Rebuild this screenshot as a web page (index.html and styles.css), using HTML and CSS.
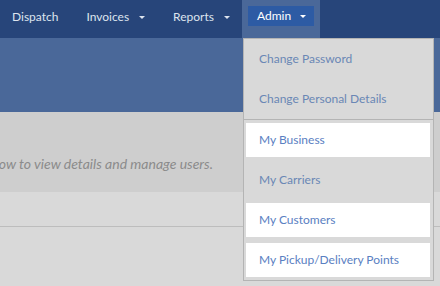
FILE: index.html
```html
<!DOCTYPE html>
<html lang="en">
<head>
    <meta charset="UTF-8">
    <meta name="viewport" content="width=device-width, initial-scale=1.0">
    <title>My Business</title>
    <link rel="stylesheet" href="styles.css">
</head>
<body>
    <nav class="topbar">
        <ul class="nav-list">
            <li class="nav-item"><a href="#">Dispatch</a></li>
            <li class="nav-item"><a href="#">Invoices<span class="caret"></span></a></li>
            <li class="nav-item"><a href="#">Reports<span class="caret"></span></a></li>
            <li class="nav-item open">
                <a href="#" class="admin-toggle">Admin<span class="caret"></span></a>
                <ul class="dropdown">
                    <li><a href="#">Change Password</a></li>
                    <li><a href="#">Change Personal Details</a></li>
                    <li class="divider"></li>
                    <li class="lit"><a href="#">My Business</a></li>
                    <li><a href="#">My Carriers</a></li>
                    <li class="lit"><a href="#">My Customers</a></li>
                    <li class="lit"><a href="#">My Pickup/Delivery Points</a></li>
                </ul>
            </li>
        </ul>
    </nav>

    <header class="page-head"></header>

    <section class="intro">
        <div class="intro-inner">
            <p>Select a business from the list below to view details and manage users.</p>
        </div>
    </section>

    <div class="table-head"></div>
    <div class="table-body"></div>
</body>
</html>
```

FILE: styles.css
```css
body {
    margin: 0;
    background-color: #d9d9d9;
    font-family: Lato, "Open Sans", sans-serif;
    font-size: 12px;
    overflow: hidden;
}
a {
    text-decoration: none;
    color: inherit;
}
.topbar {
    height: 38px;
    background-color: #27457a;
}
.nav-list {
    list-style: none;
    margin: 0;
    padding: 0 0 0 12px;
    display: flex;
    height: 100%;
}
.nav-item {
    position: relative;
    display: flex;
    align-items: center;
    margin-right: 28px;
    color: #dde4ee;
    padding-bottom: 6px;
}
.nav-item:nth-child(3) {
    margin-right: 12px;
}
.caret {
    display: inline-block;
    width: 0;
    height: 0;
    border-left: 3px solid transparent;
    border-right: 3px solid transparent;
    border-top: 3px solid #dde4ee;
    margin-left: 10px;
    vertical-align: middle;
}
.nav-item.open {
    background-color: #4a6899;
    padding: 6px 6px 0;
    align-items: flex-start;
    color: #fff;
}
.admin-toggle {
    display: block;
    height: 20px;
    line-height: 19px;
    padding: 0 8px 0 9px;
    background-color: #2d5ba4;
}
.admin-toggle .caret {
    border-top-color: #fff;
    margin-left: 9px;
}
.dropdown {
    position: absolute;
    top: 38px;
    left: 1px;
    width: 189px;
    list-style: none;
    margin: 0;
    padding: 0;
    display: flex;
    flex-direction: column;
    background-color: #d9d9d9;
    border: 1px solid #b4b4b4;
    z-index: 2;
}
.dropdown li {
    margin: 3px 3px 3px 2px;
    height: 34px;
}
.dropdown li a {
    display: block;
    line-height: 34px;
    padding-left: 13px;
    color: #6a87b5;
}
.dropdown li.lit {
    background-color: #fff;
}
.dropdown li.lit a {
    color: #5a80c2;
}
.dropdown li.divider {
    height: 1px;
    margin: 0;
    background-color: #b4b4b4;
}
.page-head {
    height: 74px;
    background-color: #4a6899;
}
.intro {
    height: 80px;
    background-color: #cecece;
    overflow: hidden;
}
.intro-inner {
    width: 213px;
    display: flex;
    justify-content: flex-end;
}
.intro p {
    margin: 0;
    padding-top: 43px;
    white-space: nowrap;
    font-size: 14px;
    font-style: italic;
    color: #8b8b8b;
}
.table-head {
    height: 34px;
    border-bottom: 1px solid #bdbdbd;
}
.table-body {
    height: 60px;
}
```
